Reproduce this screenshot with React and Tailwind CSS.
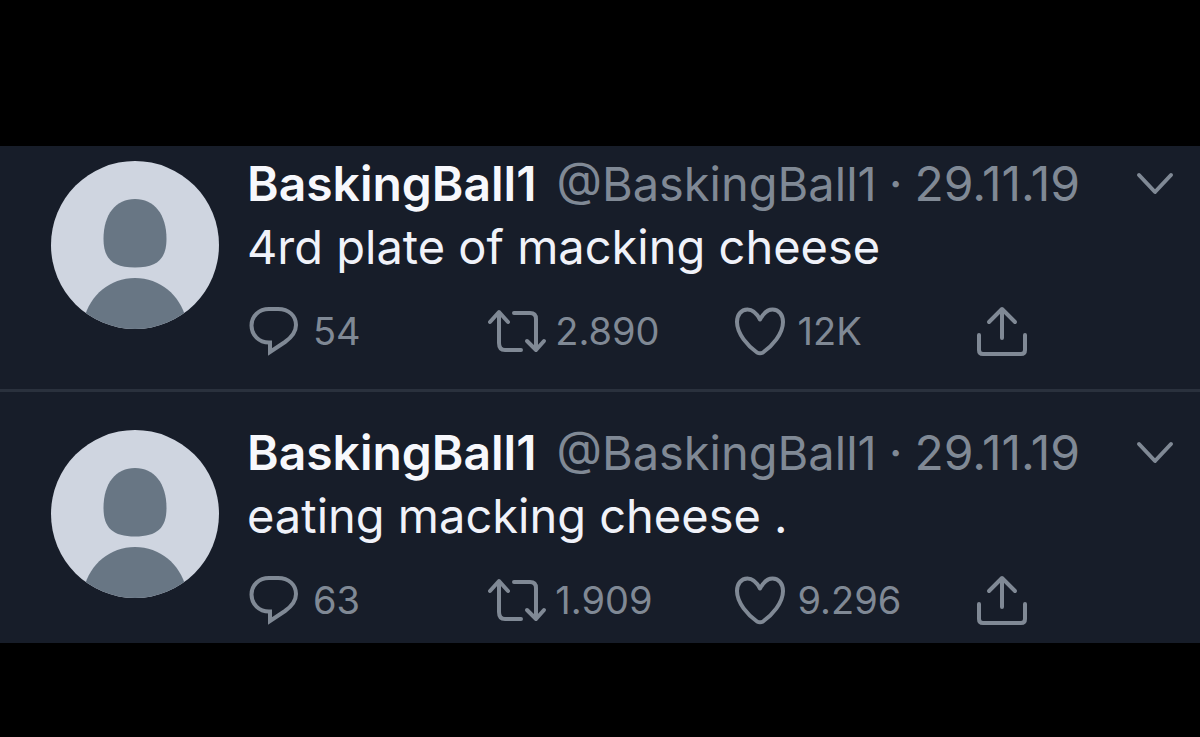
const tweets = [
  {
    id: 1,
    text: '4rd plate of macking cheese',
    replies: '54',
    retweets: '2.890',
    likes: '12K',
    spacing: 'pt-[6px] pb-[32px] border-b-3 border-[#2a313d]',
  },
  {
    id: 2,
    text: 'eating macking cheese .',
    replies: '63',
    retweets: '1.909',
    likes: '9.296',
    spacing: 'pt-[29px] pb-[17px]',
  },
];

const stroke = {
  fill: 'none',
  stroke: 'currentColor',
  strokeWidth: 4,
  strokeLinecap: 'round',
  strokeLinejoin: 'round',
  'aria-hidden': true,
};

function Avatar() {
  return (
    <svg
      className="mt-[9px] size-[168px] shrink-0 rounded-full bg-[#cfd5e0]"
      viewBox="0 0 168 168"
      fill="#687684"
      aria-hidden="true"
    >
      <path d="M84 38C103 38 115.500 53 115.500 78C115.500 98 106 106.500 84 106.500C62 106.500 52.500 98 52.500 78C52.500 53 65 38 84 38Z" />
      <path d="M33 158C39 134 59 117 84 117C109 117 129 134 135 158V168H33Z" />
    </svg>
  );
}

function ReplyIcon() {
  return (
    <svg className="h-[52px] w-[52px]" viewBox="0 0 52 52" {...stroke} strokeLinejoin="miter">
      <path d="M20 4H29C40 4 47 11 47 20C47 27 43 32 36 37L21 47V37.500H20C10 37.500 2.500 30 2.500 20.500C2.500 11 10 4 20 4Z" />
    </svg>
  );
}

function RetweetIcon() {
  return (
    <svg className="h-[52px] w-[60px]" viewBox="0 0 60 52" {...stroke}>
      <path d="M3 17L12 7L21 17M12 8V38Q12 45 18 45H34" />
      <path d="M27 8H43Q49 8 49 14V44M40 36L49 45L57 36" />
    </svg>
  );
}

function LikeIcon() {
  return (
    <svg className="h-[52px] w-[52px]" viewBox="0 0 52 52" {...stroke}>
      <path d="M26 14.500C22 7 18 4.500 13.500 4.500C7 4.500 3 10 3 17C3 29 14 41 23 47.500Q26 49 29 47.500C38 41 49 29 49 17C49 10 45 4.500 38.500 4.500C34 4.500 30 7 26 14.500Z" />
    </svg>
  );
}

function ShareIcon() {
  return (
    <svg className="h-[52px] w-[52px]" viewBox="0 0 52 52" {...stroke}>
      <path d="M13 17L26 4L39 17M26 5V33" />
      <path d="M3 30V45Q3 49 7 49H45Q49 49 49 45V30" />
    </svg>
  );
}

function Action({ label, count, children, className }) {
  return (
    <button
      type="button"
      aria-label={count ? `${label}: ${count}` : label}
      className={`flex items-center justify-self-start text-[38px] leading-[52px] whitespace-nowrap ${className}`}
    >
      {children}
      {count && <span>{count}</span>}
    </button>
  );
}

function Tweet({ tweet }) {
  return (
    <article className={`flex gap-7 pr-[26px] pl-[51px] ${tweet.spacing}`}>
      <Avatar />
      <div className="min-w-0 flex-1">
        <header className="flex items-center text-[48px] leading-[63px] whitespace-nowrap text-[#808995]">
          <strong className="font-semibold text-[#f7f8fc]">BaskingBall1</strong>
          <span className="ml-5 text-[47px]">@BaskingBall1</span>
          <span className="mx-3">·</span>
          <time dateTime="2019-11-29">29.11.19</time>
          <button type="button" aria-label="More options" className="ml-auto">
            <svg className="h-[24px] w-[38px]" viewBox="0 0 38 24" {...stroke}>
              <path d="M3 3L19 20L35 3" />
            </svg>
          </button>
        </header>
        <p className="text-[47px] leading-[63px] text-[#f0f2f9]">{tweet.text}</p>
        <div className="mt-[27px] grid grid-cols-[238fr_248fr_242fr_198fr] text-[#808995]">
          <Action label="Reply" count={tweet.replies} className="gap-3 pl-[2px]">
            <ReplyIcon />
          </Action>
          <Action label="Retweet" count={tweet.retweets} className="gap-2 pl-[2px]">
            <RetweetIcon />
          </Action>
          <Action label="Like" count={tweet.likes} className="gap-3">
            <LikeIcon />
          </Action>
          <Action label="Share">
            <ShareIcon />
          </Action>
        </div>
      </div>
    </article>
  );
}

export default function App() {
  return (
    <main className="min-h-screen bg-black pt-[146px] pb-[94px] font-[Inter,sans-serif]">
      <section aria-label="Tweets" className="bg-[#171d29]">
        {tweets.map((tweet) => (
          <Tweet key={tweet.id} tweet={tweet} />
        ))}
      </section>
    </main>
  );
}
